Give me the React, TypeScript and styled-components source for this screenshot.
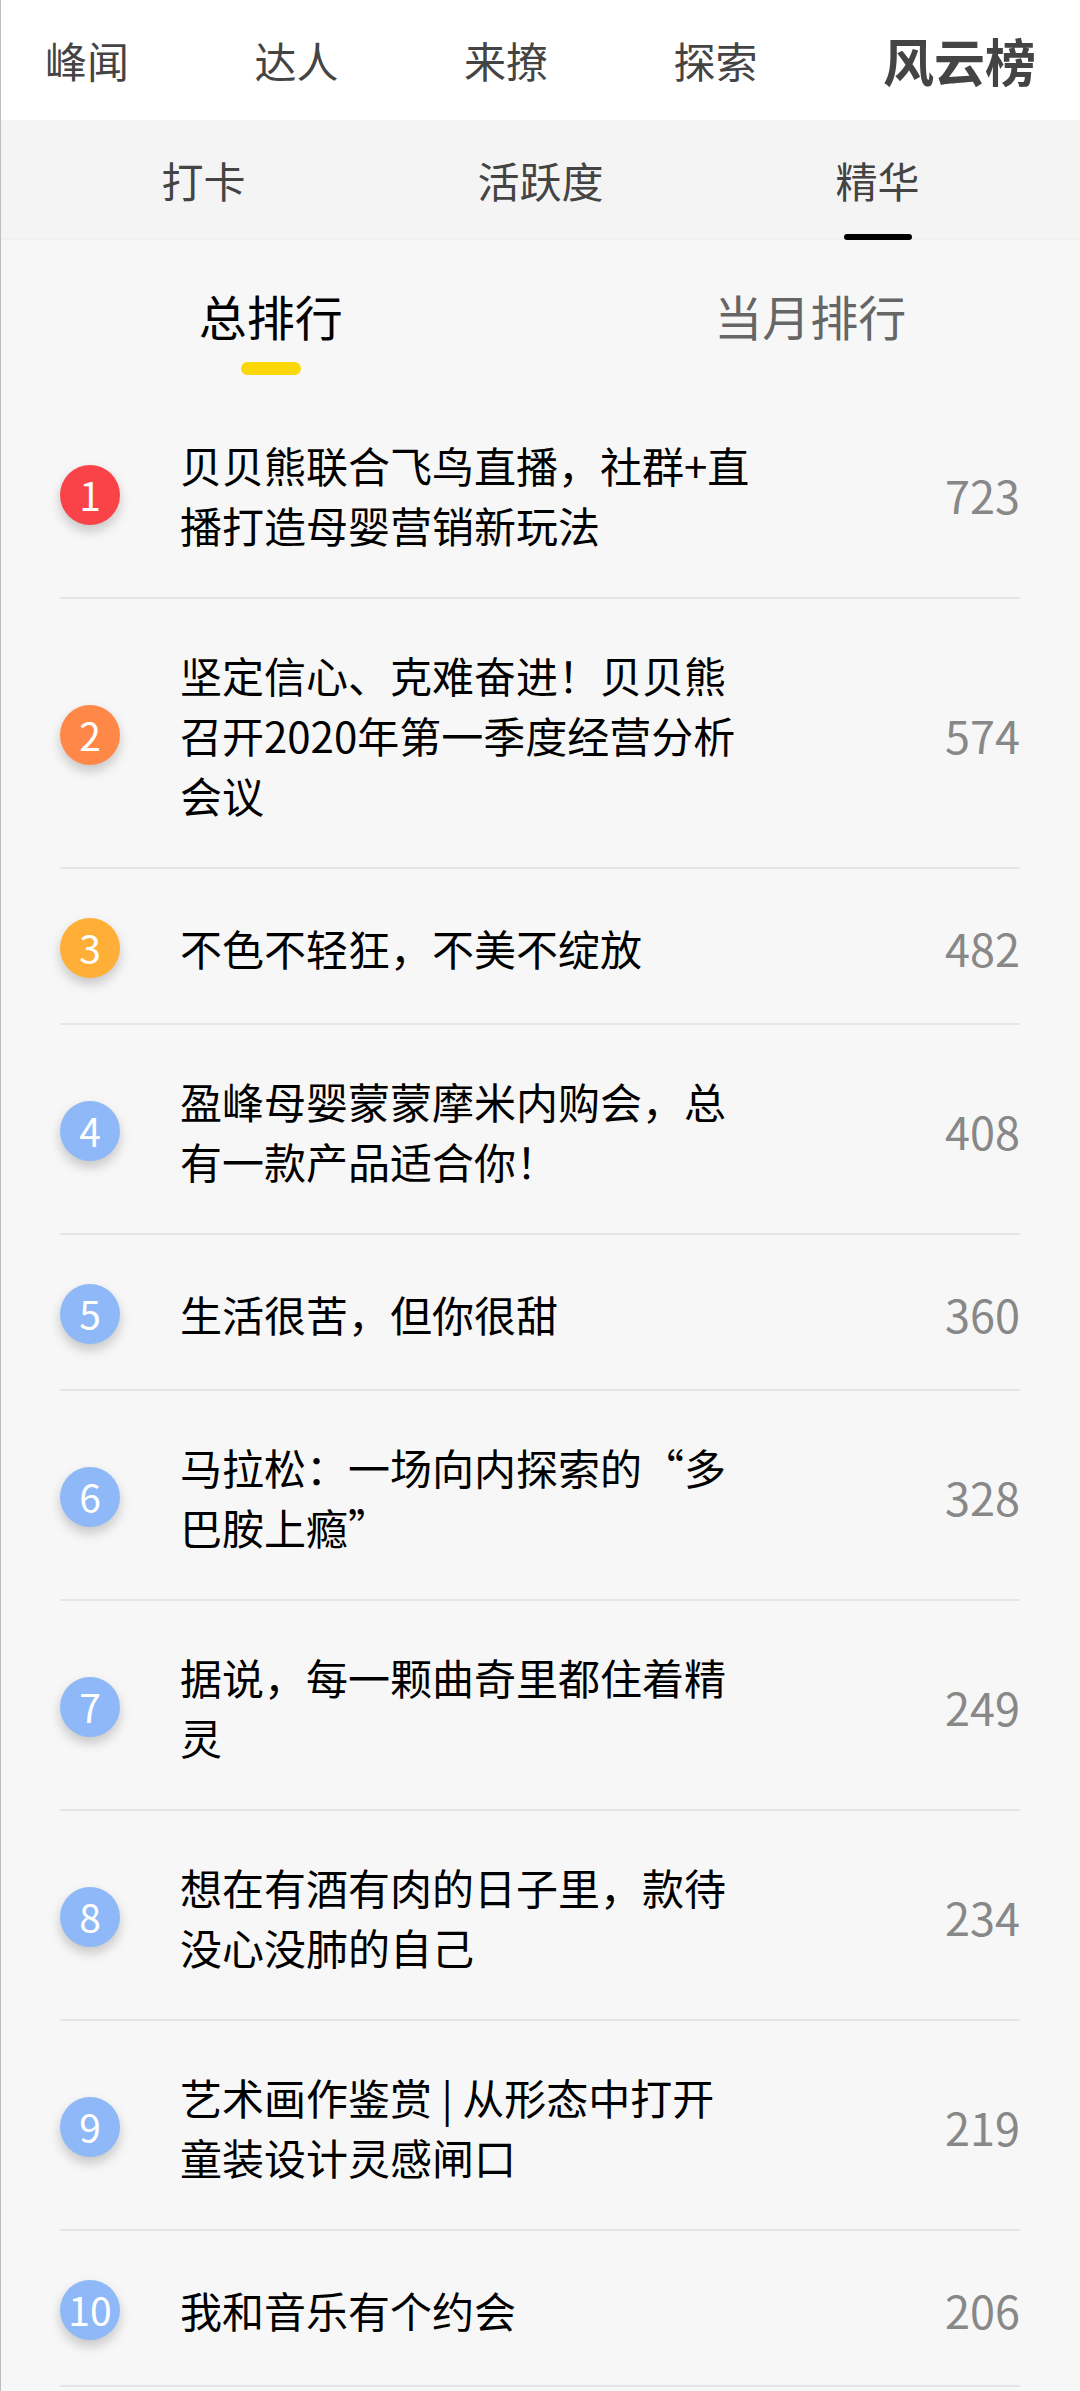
import React, { useState } from "react";
import styled, { createGlobalStyle } from "styled-components";

const GlobalStyle = createGlobalStyle`
  * {
    box-sizing: border-box;
  }

  body {
    margin: 0;
    background: #f7f7f7;
    font-family: "Noto Sans CJK SC", "Noto Sans", sans-serif;
  }
`;

const Page = styled.div`
  min-height: 100vh;
  border-left: 1px solid #bdbdbd;
  background: #f7f7f7;
`;

const TabButton = styled.button`
  border: 0;
  padding: 0;
  background: none;
  font-family: inherit;
  cursor: pointer;
  white-space: nowrap;
`;

const MainNav = styled.nav`
  display: flex;
  align-items: center;
  justify-content: space-between;
  height: 120px;
  padding: 0 44px;
  background: #fff;
`;

const MainTab = styled(TabButton)<{ $active: boolean }>`
  color: #444;
  font-size: ${(p) => (p.$active ? 51 : 42)}px;
  font-weight: ${(p) => (p.$active ? 700 : 400)};
  line-height: 60px;
`;

const SubNav = styled.nav`
  display: grid;
  grid-template-columns: repeat(3, 1fr);
  height: 120px;
  padding: 0 34px;
  border-bottom: 2px solid #f0f0f0;
  background: #f4f4f4;
`;

const SubTab = styled(TabButton)<{ $active: boolean }>`
  position: relative;
  padding-top: 2px;
  color: #444;
  font-size: 42px;
  line-height: 60px;

  &::after {
    content: "";
    position: absolute;
    bottom: -2px;
    left: 50%;
    width: 68px;
    height: 6px;
    margin-left: -34px;
    border-radius: 3px;
    background: ${(p) => (p.$active ? "#000" : "transparent")};
  }
`;

const RangeNav = styled.nav`
  display: grid;
  grid-template-columns: repeat(2, 1fr);
  padding: 45px 0 14px;
`;

const RangeTab = styled(TabButton)<{ $active: boolean }>`
  display: flex;
  flex-direction: column;
  align-items: center;
  gap: 17px;
  color: ${(p) => (p.$active ? "#000" : "#666")};
  font-size: 48px;
  line-height: 60px;

  &::after {
    content: "";
    width: 60px;
    height: 13px;
    border-radius: 7px;
    background: ${(p) => (p.$active ? "#fcd707" : "transparent")};
  }
`;

const RankList = styled.ol`
  margin: 0;
  padding: 0 60px 0 59px;
  list-style: none;
`;

const RankRow = styled.li`
  display: flex;
  align-items: center;
  padding: 46px 0 42px;
  border-bottom: 2px solid #e5e5e5;
`;

const Badge = styled.span<{ $color: string }>`
  flex: none;
  width: 60px;
  height: 60px;
  margin-right: 60px;
  border-radius: 50%;
  background: ${(p) => p.$color};
  box-shadow: 0 6px 12px rgba(0, 0, 0, 0.2);
  color: #fff;
  font-size: 39px;
  line-height: 58px;
  text-align: center;
`;

const Title = styled.span`
  flex: 0 0 60%;
  color: #000;
  font-size: 42px;
  line-height: 60px;
`;

const Score = styled.span`
  flex: 1;
  color: #888;
  font-size: 45px;
  line-height: 66px;
  text-align: right;
`;

const mainTabs = ["峰闻", "达人", "来撩", "探索", "风云榜"];
const subTabs = ["打卡", "活跃度", "精华"];
const rangeTabs = ["总排行", "当月排行"];

const medalColors = ["#f94349", "#ff8848", "#ffae37"];
const defaultBadgeColor = "#8eb8f7";

const entries = [
  { title: "贝贝熊联合飞鸟直播，社群+直播打造母婴营销新玩法", score: 723 },
  { title: "坚定信心、克难奋进！贝贝熊召开2020年第一季度经营分析会议", score: 574 },
  { title: "不色不轻狂，不美不绽放", score: 482 },
  { title: "盈峰母婴蒙蒙摩米内购会，总有一款产品适合你！", score: 408 },
  { title: "生活很苦，但你很甜", score: 360 },
  { title: "马拉松：一场向内探索的“多巴胺上瘾”", score: 328 },
  { title: "据说，每一颗曲奇里都住着精灵", score: 249 },
  { title: "想在有酒有肉的日子里，款待没心没肺的自己", score: 234 },
  { title: "艺术画作鉴赏 | 从形态中打开童装设计灵感闸口", score: 219 },
  { title: "我和音乐有个约会", score: 206 },
];

export default function App() {
  const [mainTab, setMainTab] = useState("风云榜");
  const [subTab, setSubTab] = useState("精华");
  const [range, setRange] = useState("总排行");

  return (
    <Page lang="zh-CN">
      <GlobalStyle />
      <MainNav>
        {mainTabs.map((name) => (
          <MainTab key={name} type="button" $active={name === mainTab} onClick={() => setMainTab(name)}>
            {name}
          </MainTab>
        ))}
      </MainNav>
      <SubNav>
        {subTabs.map((name) => (
          <SubTab key={name} type="button" $active={name === subTab} onClick={() => setSubTab(name)}>
            {name}
          </SubTab>
        ))}
      </SubNav>
      <main>
        <RangeNav>
          {rangeTabs.map((name) => (
            <RangeTab key={name} type="button" $active={name === range} onClick={() => setRange(name)}>
              {name}
            </RangeTab>
          ))}
        </RangeNav>
        <RankList>
          {entries.map((entry, index) => (
            <RankRow key={entry.title}>
              <Badge $color={medalColors[index] ?? defaultBadgeColor}>{index + 1}</Badge>
              <Title>{entry.title}</Title>
              <Score>{entry.score}</Score>
            </RankRow>
          ))}
        </RankList>
      </main>
    </Page>
  );
}
